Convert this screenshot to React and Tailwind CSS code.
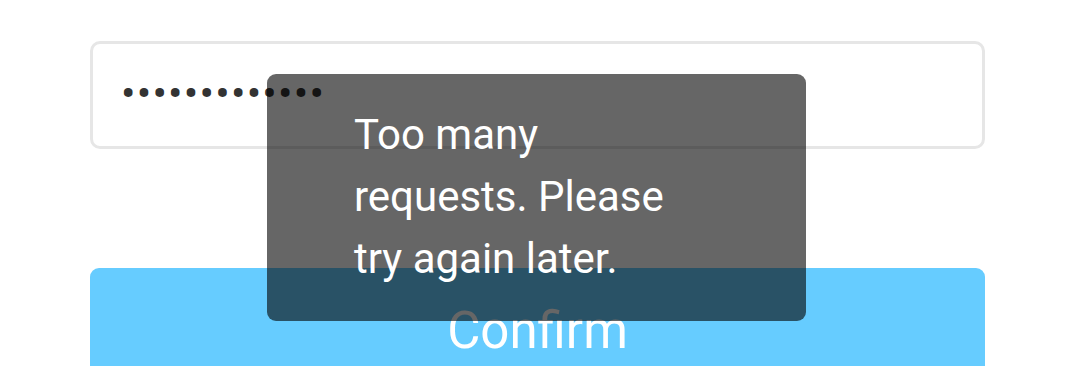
import React from "react";

export default function App() {
  return (
    <div
      className="relative h-[366px] w-full overflow-hidden bg-white"
      style={{ fontFamily: "Roboto, 'Noto Sans', sans-serif" }}
    >
      <div className="flex w-[895px] flex-col pl-0 ml-[90px] pt-[41px]">
        {/* Password field */}
        <div className="flex h-[108px] items-center rounded-[10px] border-[3px] border-[#e6e6e6] pl-[28px]">
          <input
            type="password"
            readOnly
            value="abcdefghijklm"
            className="w-full bg-transparent text-[43px] leading-none tracking-[1.2px] text-[#333333] outline-none mt-[-4px]"
            style={{ fontFamily: "Roboto, sans-serif" }}
          />
        </div>

        {/* Confirm button */}
        <button
          type="button"
          className="mt-[119px] flex h-[124px] items-start justify-center rounded-[9px] bg-[#66ccff] pt-[34px] text-[51px] leading-[58px] text-white"
        >
          Confirm
        </button>
      </div>

      {/* Toast */}
      <div className="absolute left-[267px] top-[74px] h-[247px] w-[539px] rounded-[9px] bg-black/60 pl-[87px] pt-[30px]">
        <p className="w-[330px] text-[42px] leading-[62px] text-white">
          Too many requests. Please try again later.
        </p>
      </div>
    </div>
  );
}
